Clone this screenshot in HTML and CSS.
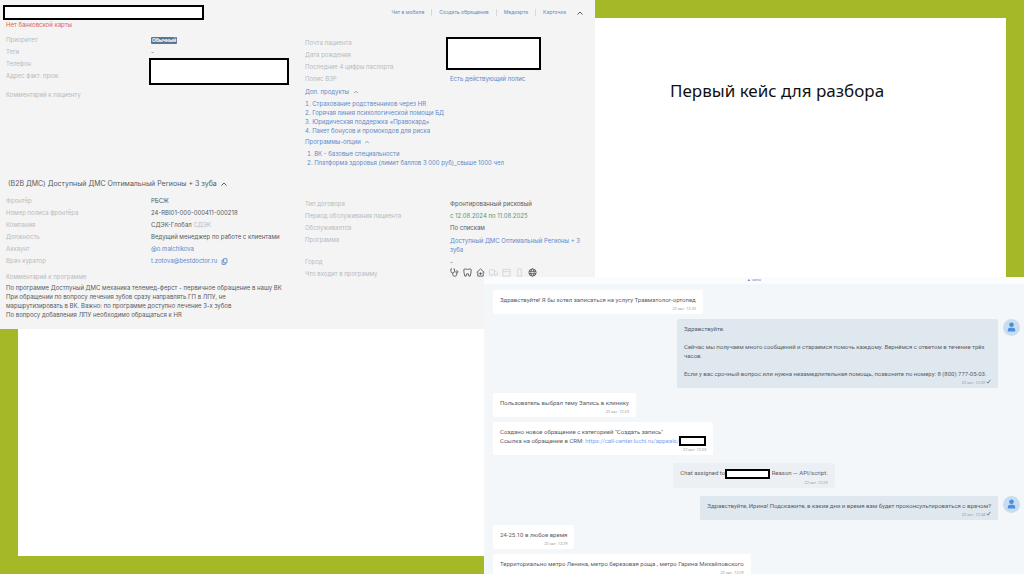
FILE: index.html
```html
<!DOCTYPE html>
<html lang="ru">

<head>
    <meta charset="UTF-8">
    <meta name="viewport" content="width=device-width, initial-scale=1.0">
    <title>Первый кейс для разбора</title>
    <link rel="stylesheet" href="styles.css">
</head>

<body>
    <main class="slide">
        <div class="frame"></div>
        <h1>Первый кейс для разбора</h1>

        <!-- карточка пациента -->
        <section class="card">
            <header class="card-header">
                <div class="hidden-box hidden-name"></div>
                <nav>
                    <a href="#">Чат в мобиле</a>
                    <a href="#">Создать обращение</a>
                    <a href="#">Медкарта</a>
                    <a href="#">Карточка</a>
                </nav>
                <button class="toggle" aria-label="Свернуть">
                    <svg viewBox="0 0 8 8"><path d="M1.5 5.5 4 3l2.500 2.500"/></svg>
                </button>
            </header>
            <p class="warning">Нет банковской карты</p>

            <div class="columns patient">
                <dl class="fields">
                    <dt>Приоритет</dt>
                    <dd><span class="badge">Обычный</span></dd>
                    <dt>Теги</dt>
                    <dd>-</dd>
                    <dt>Телефон</dt>
                    <dd class="hidden-box hidden-phone"></dd>
                    <dt>Адрес факт. прож.</dt>
                    <dt class="comment-label">Комментарий к пациенту</dt>
                </dl>
                <div class="column-right">
                    <dl class="fields">
                        <dt>Почта пациента</dt>
                        <dd class="hidden-box hidden-mail"></dd>
                        <dt>Дата рождения</dt>
                        <dt>Последние 4 цифры паспорта</dt>
                        <dt>Полис ВЗР</dt>
                        <dd><a href="#">Есть действующий полис</a></dd>
                    </dl>
                    <button class="group">Доп. продукты
                        <svg viewBox="0 0 8 8"><path d="M1.5 5.5 4 3l2.500 2.500"/></svg>
                    </button>
                    <ol>
                        <li><a href="#">Страхование родственников через HR</a></li>
                        <li><a href="#">Горячая линия психологической помощи БД</a></li>
                        <li><a href="#">Юридическая поддержка «Правокард»</a></li>
                        <li><a href="#">Пакет бонусов и промокодов для риска</a></li>
                    </ol>
                    <button class="group">Программы-опции
                        <svg viewBox="0 0 8 8"><path d="M1.5 5.5 4 3l2.500 2.500"/></svg>
                    </button>
                    <ol class="options">
                        <li><a href="#">ВК - базовые специальности</a></li>
                        <li><a href="#">Платформа здоровья (лимит баллов 3 000 руб)_свыше 1000 чел</a></li>
                    </ol>
                </div>
            </div>

            <h2>
                (B2B ДМС) Доступный ДМС Оптимальный Регионы + 3 зуба
                <button class="toggle" aria-label="Свернуть">
                    <svg viewBox="0 0 8 8"><path d="M1.5 5.5 4 3l2.500 2.500"/></svg>
                </button>
            </h2>

            <div class="columns">
                <div>
                    <dl class="fields">
                        <dt>Фронтёр</dt>
                        <dd>РБСЖ</dd>
                        <dt>Номер полиса фронтёра</dt>
                        <dd>24-RBI01-000-000411-000218</dd>
                        <dt>Компания</dt>
                        <dd>СДЭК-Глобал <span class="muted">СДЭК</span></dd>
                        <dt>Должность</dt>
                        <dd>Ведущий менеджер по работе с клиентами</dd>
                        <dt>Аккаунт</dt>
                        <dd><a href="#">@o.malchikova</a></dd>
                        <dt>Врач куратор</dt>
                        <dd>
                            <a href="#">t.zotova@bestdoctor.ru</a>
                            <svg class="copy" viewBox="0 0 8 8"><path d="M3 .8h3.800v4.700H3zM3 2.300H1.200v5h3.900V5.600"/></svg>
                        </dd>
                    </dl>
                    <p class="muted note-label">Комментарий к программе</p>
                    <p class="note">По программе Достпуный ДМС механика телемед-ферст - первичное обращение в нашу ВК<br>
                        При обращении по вопросу лечения зубов сразу направлять ГП в ЛПУ, не<br>
                        маршрутизировать в ВК. Важно: по программе доступно лечение 3-х зубов<br>
                        По вопросу добавления ЛПУ необходимо обращаться к HR</p>
                </div>
                <dl class="fields contract">
                    <dt>Тип договора</dt>
                    <dd>Фронтированный рисковый</dd>
                    <dt>Период обслуживания пациента</dt>
                    <dd class="period">с 12.08.2024 по 11.08.2025</dd>
                    <dt>Обслуживается</dt>
                    <dd>По спискам</dd>
                    <dt>Программа</dt>
                    <dd class="program"><a href="#">Доступный ДМС Оптимальный Регионы + 3 зуба</a></dd>
                    <dt>Город</dt>
                    <dd>-</dd>
                    <dt>Что входит в программу</dt>
                    <dd class="services">
                        <svg viewBox="0 0 10 10"><path d="M2.200 1H1v2.500a2 2 0 0 0 4 0V1H3.900M3 5.500V7a2.200 2.200 0 0 0 4.500 0V5.500"/><circle cx="7.600" cy="4.300" r="1.200"/></svg>
                        <svg viewBox="0 0 10 10"><path d="M1 1.500 2.500 1l2.500.6L7.500 1 9 1.500v3L8 9H6.500L6 6.500H4L3.500 9H2L1 4.500z"/></svg>
                        <svg viewBox="0 0 10 10"><path d="M.8 5 5 1l4.200 4M2 4.200V9h6V4.200M5 4.800v2.900M3.500 6.200h3"/></svg>
                        <svg class="off" viewBox="0 0 10 10"><path d="M.5 2h5.500v5.500H.5zM6 4h2l1.500 1.500v2H6M2 8.500h1M7 8.500h1"/></svg>
                        <svg class="off" viewBox="0 0 10 10"><path d="M1 1.500h8v7.500H1zM1 4h8"/></svg>
                        <svg class="off" viewBox="0 0 10 10"><path d="M3 1h4v6.500L8 9H2l1-1.500z"/></svg>
                        <svg viewBox="0 0 10 10"><circle cx="5" cy="5" r="4"/><ellipse cx="5" cy="5" rx="1.800" ry="4"/><path d="M1 3.700h8M1 6.300h8"/></svg>
                    </dd>
                </dl>
            </div>
        </section>

        <!-- чат -->
        <section class="chat">
            <header class="chat-header"><a href="#">▲ чаты</a></header>
            <div class="messages">
                <div class="message">
                    <div class="bubble">
                        <p>Здравствуйте! Я бы хотел записаться на услугу Травматолог-ортопед</p>
                        <time>22 окт. 12:23</time>
                    </div>
                </div>
                <div class="message outgoing">
                    <div class="bubble">
                        <p>Здравствуйте.</p>
                        <br>
                        <p>Сейчас мы получаем много сообщений и стараемся помочь каждому. Вернёмся с ответом в течение трёх часов.</p>
                        <br>
                        <p>Если у вас срочный вопрос или нужна незамедлительная помощь, позвоните по номеру: 8 (800) 777-05-03.</p>
                        <time>22 окт. 12:23 <svg viewBox="0 0 6 6"><path d="M.8 3.300 2.300 5 5.300 1"/></svg></time>
                    </div>
                    <svg class="avatar" viewBox="0 0 17 17"><circle cx="8.500" cy="5.800" r="2.300"/><path d="M4.800 12.500V11c0-1.300 1.200-2.200 2.500-2.200h2.400c1.300 0 2.500.9 2.500 2.200v1.500z"/></svg>
                </div>
                <div class="message">
                    <div class="bubble">
                        <p>Пользователь выбрал тему Запись в клинику</p>
                        <time>22 окт. 12:23</time>
                    </div>
                </div>
                <div class="message">
                    <div class="bubble">
                        <p>Создано новое обращение с категорией "Создать запись"</p>
                        <p>Ссылка на обращение в CRM: <a href="#">https://call-center.luchi.ru/appeals/</a><span class="hidden-box hidden-id"></span></p>
                        <time>22 окт. 12:23</time>
                    </div>
                </div>
                <div class="message system">
                    <div class="bubble">
                        <p>Chat assigned to<span class="hidden-box hidden-agent"></span> Reason — API/script.</p>
                        <time>22 окт. 12:23</time>
                    </div>
                </div>
                <div class="message outgoing">
                    <div class="bubble">
                        <p>Здравствуйте, Ирина! Подскажите, в какие дни и время вам будет проконсультироваться с врачом?</p>
                        <time>22 окт. 12:24 <svg viewBox="0 0 6 6"><path d="M.8 3.300 2.300 5 5.300 1"/></svg></time>
                    </div>
                    <svg class="avatar" viewBox="0 0 17 17"><circle cx="8.500" cy="5.800" r="2.300"/><path d="M4.800 12.500V11c0-1.300 1.200-2.200 2.500-2.200h2.400c1.300 0 2.500.9 2.500 2.200v1.500z"/></svg>
                </div>
                <div class="message">
                    <div class="bubble">
                        <p>24-25.10 в любое время</p>
                        <time>22 окт. 12:29</time>
                    </div>
                </div>
                <div class="message">
                    <div class="bubble">
                        <p>Территориально метро Ленина, метро березовая роща , метро Гарина Михайловского</p>
                        <time>22 окт. 12:29</time>
                    </div>
                </div>
            </div>
        </section>
    </main>
</body>

</html>
```
FILE: styles.css
```css
* {
    box-sizing: border-box;
}

body,
h1,
h2,
p,
dl,
dd,
ol {
    margin: 0;
    padding: 0;
}

a {
    color: #5c8bca;
    text-decoration: none;
}

button {
    background: none;
    border: none;
    padding: 0;
    color: inherit;
    font: inherit;
    cursor: pointer;
}

svg {
    fill: none;
    stroke: currentColor;
}

/* слайд: карточка и чат лежат поверх рамки */
.slide {
    display: grid;
    grid-template-columns: 484fr 111fr 429fr;
    grid-template-rows: 277px minmax(0, 1fr);
    height: 100vh;
    overflow: hidden;
}

.frame {
    grid-area: 1 / 1 / 3 / 4;
    background: #fff;
    border: 18px solid #a5b827;
}

h1 {
    grid-area: 1 / 3;
    padding: 78px 0 0 75px;
    font: 17px/26px "Noto Sans", sans-serif;
    color: #111;
}

.hidden-box {
    background: #fff;
    border: 2px solid #000;
}

/* карточка */
.card {
    grid-area: 1 / 1 / 3 / 3;
    align-self: start;
    padding: 5px 0 10px 6px;
    background: #f4f4f4;
    color: #585a5e;
    font: 6px/9px Inter, sans-serif;
}

.card-header {
    display: flex;
    align-items: center;
    height: 15px;
}

.hidden-name {
    width: 201px;
    height: 15px;
    margin-left: -3px;
}

nav {
    display: flex;
    margin-left: auto;
    font-size: 5px;
    line-height: 7px;
}

nav a + a {
    margin-left: 7px;
    padding-left: 7px;
    border-left: 1px solid #d5d9df;
}

.toggle svg {
    width: 8px;
    height: 8px;
}

.card-header .toggle {
    height: 8px;
    margin: 0 11px 0 10px;
    line-height: 0;
}

.warning {
    color: #e0605a;
}

.columns {
    display: grid;
    grid-template-columns: 1fr 1fr;
    column-gap: 9px;
}

.patient {
    margin-top: 5px;
}

.column-right {
    padding-top: 3px;
}

.fields {
    display: grid;
    grid-template-columns: 1fr 1fr;
    grid-auto-rows: minmax(12px, auto);
    align-content: start;
    line-height: 12px;
}

dt,
.muted {
    color: #b8babd;
}

dt {
    grid-column: 1;
}

dd {
    grid-column: 2;
}

.badge {
    display: block;
    width: 26px;
    height: 7px;
    margin-top: 3px;
    background: #5b7796;
    border-radius: 1px;
    color: #fff;
    font-weight: bold;
    font-size: 5px;
    line-height: 7px;
    text-align: center;
}

.hidden-phone {
    grid-row: 3 / 5;
    width: 140px;
    height: 27px;
    margin: 0 0 -3px -2px;
}

.comment-label {
    margin-top: 7px;
}

.hidden-mail {
    grid-row: 1 / 4;
    width: 95px;
    height: 33px;
    margin-left: -4px;
}

.group {
    display: block;
    height: 14px;
    color: #5c8bca;
    line-height: 14px;
}

.group svg {
    width: 6px;
    height: 6px;
    margin-left: 2px;
    vertical-align: middle;
}

ol {
    list-style-position: inside;
    color: #5c8bca;
}

.options {
    padding-left: 2px;
}

h2 {
    margin: 11px 0 5px 2px;
    font-size: 7px;
    line-height: 12px;
    font-weight: normal;
}

h2 .toggle {
    margin-left: 1px;
    vertical-align: middle;
}

h2 svg {
    display: block;
}

.copy {
    width: 7px;
    height: 7px;
    margin-left: 2px;
    vertical-align: middle;
    color: #5c8bca;
}

.note-label {
    margin-top: 5px;
}

.note {
    margin-top: 2px;
}

.contract {
    padding-top: 3px;
}

.period {
    color: #4a9a7c;
}

.program {
    padding: 2px 6px 2px 0;
    line-height: 9px;
}

.services {
    display: flex;
    align-items: flex-start;
    gap: 4px;
}

.services svg {
    width: 9px;
    height: 9px;
}

.services .off {
    color: #d3d5d8;
}

/* чат */
.chat {
    grid-area: 2 / 2 / 3 / 4;
    overflow: hidden;
    background: #f4f7fa;
    color: #5c6065;
    font: 6px/9px Roboto, sans-serif;
}

.chat-header {
    height: 7px;
    background: #fafcfe;
    font-size: 4px;
    line-height: 5px;
    text-align: center;
}

.messages {
    display: flex;
    flex-direction: column;
    gap: 5px;
    padding: 6px 4px 0 9px;
}

.message {
    display: flex;
    gap: 5px;
}

.outgoing {
    justify-content: flex-end;
}

.system {
    justify-content: center;
    margin: 3px 5px 3px 0;
}

.bubble {
    max-width: 321px;
    padding: 5px 7px 0;
    background: #fff;
    border-radius: 2px;
}

.outgoing .bubble {
    background: #dfe7ef;
}

.system .bubble {
    background: #ecf0f5;
}

.bubble a {
    color: #7ba6ee;
}

time {
    display: block;
    color: #999ca1;
    font-size: 4px;
    font-style: italic;
    line-height: 10px;
    text-align: right;
}

time svg {
    width: 5px;
    height: 5px;
    color: #56677a;
}

.avatar {
    width: 17px;
    height: 17px;
    background: #c9ddf0;
    border-radius: 50%;
    fill: #478fe0;
    stroke: none;
}

.hidden-id,
.hidden-agent {
    display: inline-block;
    height: 10px;
    margin: -1px 0;
    vertical-align: middle;
}

.hidden-id {
    width: 27px;
}

.hidden-agent {
    width: 45px;
}
```
